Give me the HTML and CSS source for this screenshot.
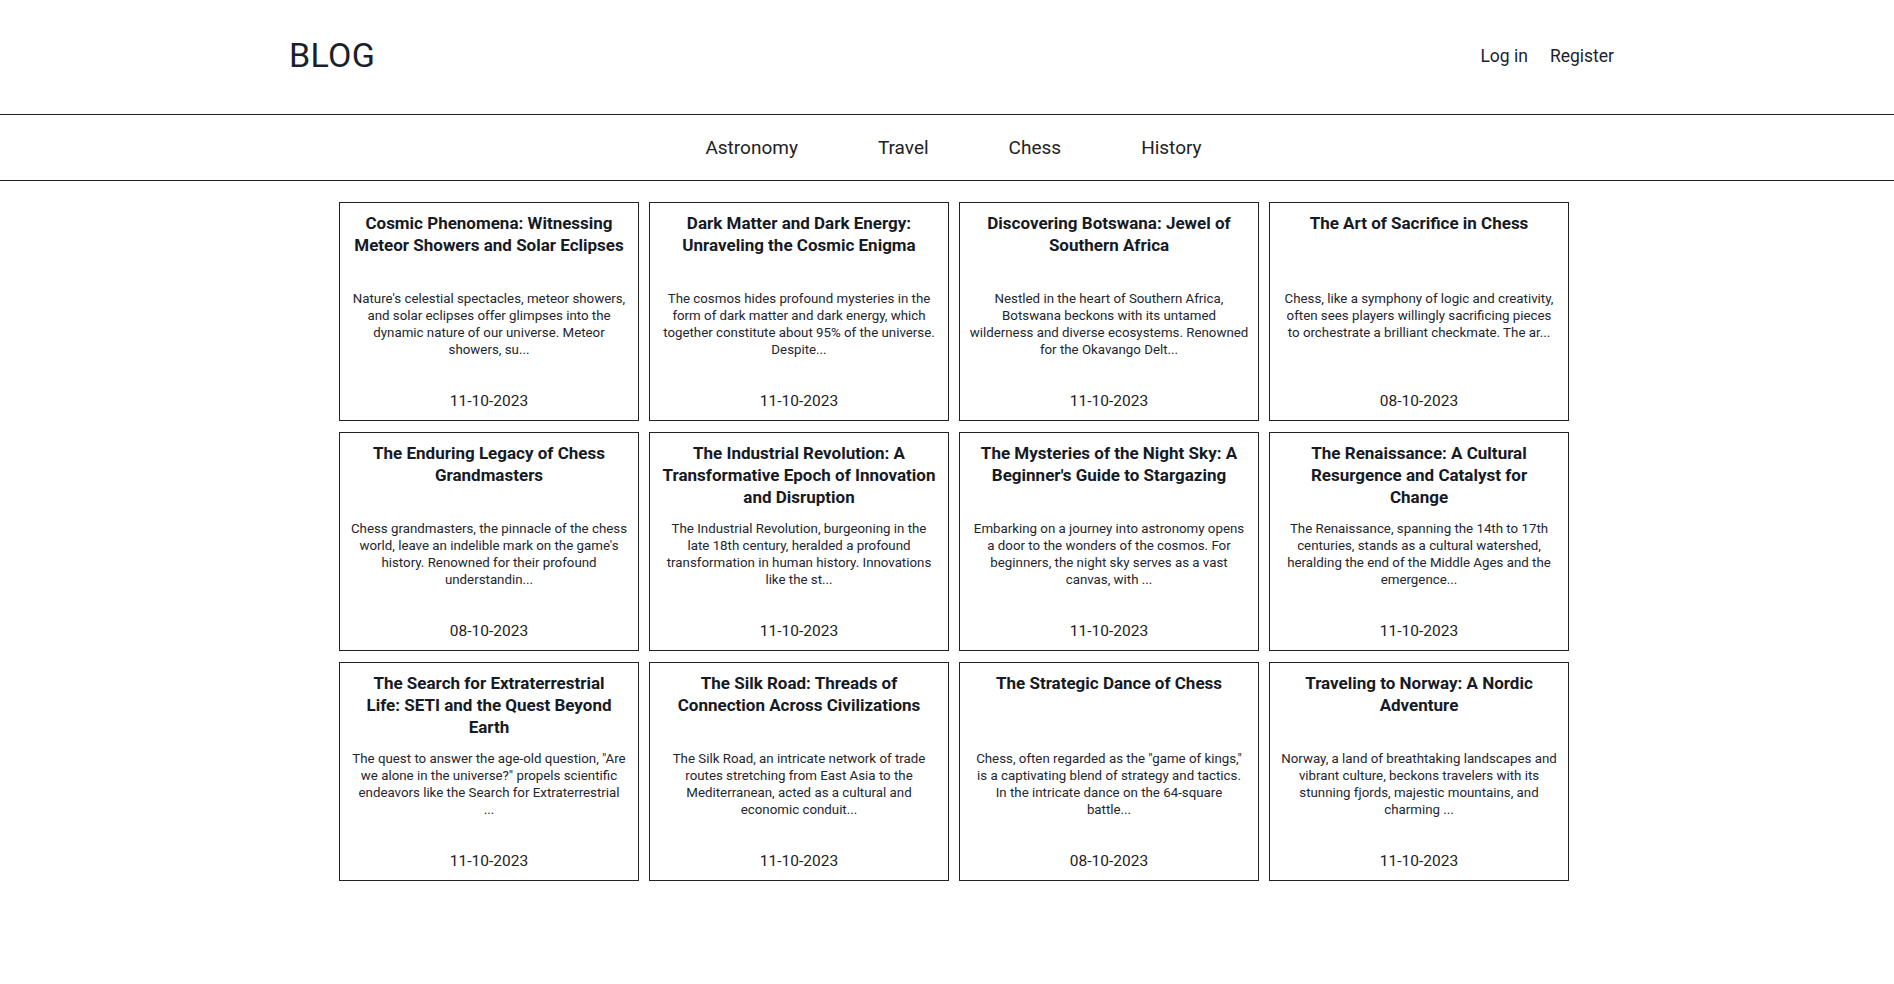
FILE: index.html
```html
<!DOCTYPE html>
<html lang="en">
<head>
<meta charset="utf-8">
<title>Blog</title>
<link rel="stylesheet" href="styles.css">
</head>
<body>
<header class="site-header">
  <div class="header-inner">
    <a class="brand" href="#">BLOG</a>
    <nav class="auth">
      <a href="#">Log in</a>
      <a href="#">Register</a>
    </nav>
  </div>
</header>
<nav class="categories">
  <a href="#">Astronomy</a>
  <a href="#">Travel</a>
  <a href="#">Chess</a>
  <a href="#">History</a>
</nav>
<main class="posts">
  <article class="card">
    <h2 class="card-title">Cosmic Phenomena: Witnessing<br>Meteor Showers and Solar Eclipses</h2>
    <p class="card-text">Nature's celestial spectacles, meteor showers,<br>and solar eclipses offer glimpses into the<br>dynamic nature of our universe. Meteor<br>showers, su...</p>
    <p class="card-date">11-10-2023</p>
  </article>
  <article class="card">
    <h2 class="card-title">Dark Matter and Dark Energy:<br>Unraveling the Cosmic Enigma</h2>
    <p class="card-text">The cosmos hides profound mysteries in the<br>form of dark matter and dark energy, which<br>together constitute about 95% of the universe.<br>Despite...</p>
    <p class="card-date">11-10-2023</p>
  </article>
  <article class="card">
    <h2 class="card-title">Discovering Botswana: Jewel of<br>Southern Africa</h2>
    <p class="card-text">Nestled in the heart of Southern Africa,<br>Botswana beckons with its untamed<br>wilderness and diverse ecosystems. Renowned<br>for the Okavango Delt...</p>
    <p class="card-date">11-10-2023</p>
  </article>
  <article class="card">
    <h2 class="card-title">The Art of Sacrifice in Chess</h2>
    <p class="card-text">Chess, like a symphony of logic and creativity,<br>often sees players willingly sacrificing pieces<br>to orchestrate a brilliant checkmate. The ar...</p>
    <p class="card-date">08-10-2023</p>
  </article>
  <article class="card">
    <h2 class="card-title">The Enduring Legacy of Chess<br>Grandmasters</h2>
    <p class="card-text">Chess grandmasters, the pinnacle of the chess<br>world, leave an indelible mark on the game's<br>history. Renowned for their profound<br>understandin...</p>
    <p class="card-date">08-10-2023</p>
  </article>
  <article class="card">
    <h2 class="card-title">The Industrial Revolution: A<br>Transformative Epoch of Innovation<br>and Disruption</h2>
    <p class="card-text">The Industrial Revolution, burgeoning in the<br>late 18th century, heralded a profound<br>transformation in human history. Innovations<br>like the st...</p>
    <p class="card-date">11-10-2023</p>
  </article>
  <article class="card">
    <h2 class="card-title">The Mysteries of the Night Sky: A<br>Beginner's Guide to Stargazing</h2>
    <p class="card-text">Embarking on a journey into astronomy opens<br>a door to the wonders of the cosmos. For<br>beginners, the night sky serves as a vast<br>canvas, with ...</p>
    <p class="card-date">11-10-2023</p>
  </article>
  <article class="card">
    <h2 class="card-title">The Renaissance: A Cultural<br>Resurgence and Catalyst for<br>Change</h2>
    <p class="card-text">The Renaissance, spanning the 14th to 17th<br>centuries, stands as a cultural watershed,<br>heralding the end of the Middle Ages and the<br>emergence...</p>
    <p class="card-date">11-10-2023</p>
  </article>
  <article class="card">
    <h2 class="card-title">The Search for Extraterrestrial<br>Life: SETI and the Quest Beyond<br>Earth</h2>
    <p class="card-text">The quest to answer the age-old question, "Are<br>we alone in the universe?" propels scientific<br>endeavors like the Search for Extraterrestrial<br>...</p>
    <p class="card-date">11-10-2023</p>
  </article>
  <article class="card">
    <h2 class="card-title">The Silk Road: Threads of<br>Connection Across Civilizations</h2>
    <p class="card-text">The Silk Road, an intricate network of trade<br>routes stretching from East Asia to the<br>Mediterranean, acted as a cultural and<br>economic conduit...</p>
    <p class="card-date">11-10-2023</p>
  </article>
  <article class="card">
    <h2 class="card-title">The Strategic Dance of Chess</h2>
    <p class="card-text">Chess, often regarded as the "game of kings,"<br>is a captivating blend of strategy and tactics.<br>In the intricate dance on the 64-square<br>battle...</p>
    <p class="card-date">08-10-2023</p>
  </article>
  <article class="card">
    <h2 class="card-title">Traveling to Norway: A Nordic<br>Adventure</h2>
    <p class="card-text">Norway, a land of breathtaking landscapes and<br>vibrant culture, beckons travelers with its<br>stunning fjords, majestic mountains, and<br>charming ...</p>
    <p class="card-date">11-10-2023</p>
  </article>
</main>
</body>
</html>
```
FILE: styles.css
```css
* { box-sizing: border-box; }

body {
  margin: 0;
  font-family: Roboto, "Open Sans", sans-serif;
  color: #1c1f2a;
  background: #fff;
}

a { color: inherit; text-decoration: none; }

.site-header {
  height: 115px;
  border-bottom: 1px solid #222;
}

.header-inner {
  width: 1325px;
  margin-left: calc(50% - 658px);
  display: flex;
  justify-content: space-between;
  align-items: flex-start;
}

.brand {
  font-size: 34px;
  line-height: 40px;
  padding-top: 35px;
  color: #1b1f2c;
  letter-spacing: 0.3px;
}

.auth {
  display: flex;
  gap: 22px;
  padding-top: 45px;
  font-size: 17.5px;
  line-height: 22px;
}

.categories {
  height: 66px;
  border-bottom: 1px solid #222;
  display: flex;
  justify-content: center;
  align-items: center;
  gap: 80px;
  padding-left: 13px;
  font-size: 19px;
  color: #222;
}

.posts {
  width: 1230px;
  margin: 21px 0 0 calc(50% - 608px);
  display: grid;
  grid-template-columns: repeat(4, 300px);
  column-gap: 10px;
  row-gap: 11px;
}

.card {
  height: 219px;
  border: 1px solid #222;
  padding: 9px 8px 9px;
  display: flex;
  flex-direction: column;
  text-align: center;
}

.card-title {
  margin: 0;
  height: 66px;
  font-size: 17px;
  line-height: 22px;
  font-weight: 700;
  color: #161a24;
  white-space: nowrap;
}

.card-text {
  margin: 12px 0 0;
  font-size: 13.3px;
  line-height: 17px;
  color: #23262e;
  white-space: nowrap;
}

.card-date {
  margin: auto 0 0;
  font-size: 15.5px;
  line-height: 19px;
  color: #222;
}
```
